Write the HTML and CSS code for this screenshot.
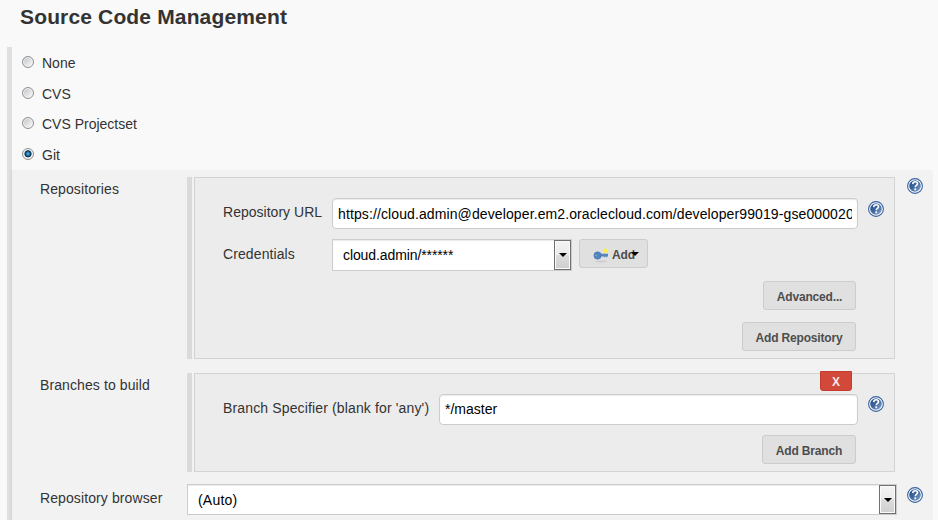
FILE: index.html
```html
<!DOCTYPE html>
<html lang="en">
<head>
<meta charset="utf-8">
<title>Source Code Management</title>
<link rel="stylesheet" href="styles.css">
</head>
<body>
<svg class="defs" aria-hidden="true">
  <defs>
    <linearGradient id="helpFill" x1="0" y1="0" x2="1" y2="1">
      <stop offset="0" stop-color="#1f478a"/><stop offset=".5" stop-color="#41699f"/><stop offset="1" stop-color="#8eabd0"/>
    </linearGradient>
    <symbol id="help" viewBox="0 0 16 16">
      <circle cx="8" cy="8" r="7.4" fill="#fff" stroke="#36609e" stroke-width="1.1"/>
      <circle cx="8" cy="8" r="5.8" fill="url(#helpFill)"/>
      <path d="M5.7 6.1C5.8 4.4 6.8 3.7 8.1 3.7c1.4 0 2.4.8 2.4 2 0 1.8-2.2 1.7-2.2 3.5" fill="none" stroke="#fff" stroke-width="1.6"/>
      <rect x="7.3" y="10.4" width="1.8" height="1.8" fill="#fff"/>
    </symbol>
  </defs>
</svg>
<h1 class="title">Source Code Management</h1>
<main class="scm">
  <label class="option"><span class="radio"></span>None</label>
  <label class="option"><span class="radio"></span>CVS</label>
  <label class="option"><span class="radio"></span>CVS Projectset</label>
  <label class="option"><span class="radio checked"></span>Git</label>
  <section class="git">
    <div class="row">
      <span class="name">Repositories</span>
      <div class="group">
        <div class="box repos">
          <div class="field">
            <span class="caption url-caption">Repository URL</span>
            <div class="input"><span class="value url">https://cloud.admin@developer.em2.oraclecloud.com/developer99019-gse000020</span></div>
            <svg class="help"><use href="#help"/></svg>
          </div>
          <div class="field credentials">
            <span class="caption url-caption cred">Credentials</span>
            <div class="select small"><span class="choice">cloud.admin/******</span><span class="arrow"></span></div>
            <button class="button add">
              <svg class="key" viewBox="0 0 16 16">
                <ellipse cx="8" cy="14.4" rx="6" ry="1" fill="#cdcdcd"/>
                <circle cx="12.5" cy="3.8" r="2.3" fill="#faed50"/>
                <path d="M7 6.8h8v2.6h-1.2v.8h-1v-.8h-1v.8h-1v-.8H7z" fill="#5585bd"/>
                <circle cx="4.6" cy="8.5" r="3.7" fill="#5585bd" stroke="#416fa9" stroke-width=".5"/>
                <circle cx="3" cy="8.5" r=".7" fill="#9dbadb"/>
              </svg>
              <span>Add</span><span class="caret"></span>
            </button>
          </div>
          <button class="button advanced">Advanced...</button>
          <button class="button add-repo">Add Repository</button>
        </div>
      </div>
      <svg class="help"><use href="#help"/></svg>
    </div>
    <div class="row second">
      <span class="name">Branches to build</span>
      <div class="group">
        <div class="box branches">
          <button class="delete">X</button>
          <div class="field">
            <span class="caption branch-caption">Branch Specifier (blank for 'any')</span>
            <div class="input branch-input"><span class="value">*/master</span></div>
            <svg class="help branch-help"><use href="#help"/></svg>
          </div>
          <button class="button add-branch">Add Branch</button>
        </div>
      </div>
    </div>
    <div class="row third">
      <span class="name">Repository browser</span>
      <div class="select wide"><span class="choice auto">(Auto)</span><span class="arrow"></span></div>
      <svg class="help browser-help"><use href="#help"/></svg>
    </div>
  </section>
</main>
</body>
</html>
```
FILE: styles.css
```css
* { box-sizing: border-box; }

body {
  margin: 0;
  height: 520px;
  overflow: hidden;
  background: #f9f9f9;
  color: #333;
  font: 14px/20px "Liberation Sans", Arial, sans-serif;
}

.defs { position: absolute; width: 0; height: 0; }

.title {
  margin: 0;
  height: 47px;
  padding: 5px 0 0 20px;
  font-size: 21px;
  line-height: 24px;
  letter-spacing: .15px;
}

.scm {
  margin-left: 7px;
  height: 473px;
  border-left: 5px solid #e0e0e0;
}

.option {
  display: flex;
  align-items: center;
  height: 30.75px;
  padding: 1px 0 0 10px;
}

.radio {
  width: 12px;
  height: 12px;
  margin: -2px 8px 0 0;
  border: 1px solid #8e8f8f;
  border-radius: 50%;
  background: linear-gradient(135deg, #bcc0c5, #f2f2f2 80%);
  box-shadow: inset 0 0 0 1px #f4f4f4;
}

.radio.checked {
  background: radial-gradient(circle at 50% 48%, #62c5ec 0, #1c6c9c 1.8px, #0d2c49 3.2px, #f4f4f4 4px);
}

.git {
  width: 923px;
  height: 350px;
  margin-left: -2px;
  padding-top: 7px;
  background: rgba(0, 0, 0, .027);
}

.row { display: flex; align-items: flex-start; padding-left: 30px; }
.row.second { margin-top: 14px; }
.row.third { margin-top: 12px; }
.name { width: 147px; padding-top: 2px; letter-spacing: .1px; }
.third .name { padding-top: 4px; }

.group {
  width: 708px;
  padding-left: 2px;
  border-left: 5px solid #dadada;
}

.box {
  width: 701px;
  border: 1px solid #d3d3d3;
  background: #ececec;
  display: flex;
  flex-direction: column;
  align-items: flex-end;
  padding-right: 38px;
}
.repos { height: 182px; padding-top: 20px; }
.branches { height: 99px; padding-top: 20px; position: relative; }

.field {
  display: flex;
  flex: none;
  align-items: flex-start;
  align-self: flex-start;
  width: 663px;
  margin-right: -2px;
  padding-left: 28px;
}
.field .input { flex: 1; }
.credentials { margin-top: 10px; }
.caption { flex: none; padding-top: 4px; }
.url-caption { width: 109px; letter-spacing: .02px; }
.cred { padding-top: 5px; letter-spacing: .1px; }
.branch-caption { width: 216px; letter-spacing: .14px; }

.input {
  height: 31px;
  min-width: 0;
  padding: 5px 5px 0;
  border: 1px solid #ccc;
  border-radius: 4px;
  background: #fff;
  box-shadow: inset 0 1px 1px rgba(0, 0, 0, .08);
  color: #000;
}
.branch-input { padding-top: 4px; }
.value { display: block; overflow: hidden; white-space: nowrap; }
.url { letter-spacing: .11px; }

.help { flex: none; width: 16px; height: 16px; display: block; }
.field .help { margin: 3px -26px 0 10px; }
.field .branch-help { margin-top: 2px; }
.row > .help { margin: 1px 0 0 12px; }
.row > .browser-help { margin: 3px 0 0 10px; }

.select {
  display: flex;
  flex: none;
  border: 1px solid #ccc;
  background: #fff;
  box-shadow: inset 0 1px 1px rgba(0, 0, 0, .08);
  color: #000;
}
.small { width: 240px; height: 32px; }
.wide { width: 710px; height: 31px; }
.choice { flex: 1; padding: 5px 10px 0; letter-spacing: -.1px; }
.auto { letter-spacing: .2px; }

.arrow {
  display: flex;
  align-items: center;
  justify-content: center;
  width: 17px;
  border: 1px solid #707070;
  background: linear-gradient(#f3f3f3, #ebebeb 49%, #ddd 50%, #cfcfcf);
  box-shadow: inset 0 0 0 1px #fafafa;
}
.arrow::before, .caret {
  content: "";
  border: solid transparent;
  border-width: 4px 4px 0;
  border-top-color: #000;
}
.small .arrow::before { margin-left: 1px; }

.button {
  height: 29px;
  padding: 2px 0 0;
  border: 1px solid #ccc;
  border-radius: 3px;
  background: #e0e0e0;
  color: #4d4d4d;
  font: bold 12px/16px "Liberation Sans", Arial, sans-serif;
  letter-spacing: -.17px;
}
.add {
  display: flex;
  align-items: center;
  width: 69px;
  margin-left: 7px;
  padding-left: 13px;
}
.key { width: 16px; height: 16px; margin-right: 3px; }
.caret { margin-left: -4px; margin-top: -2px; }
.advanced { width: 93px; margin-top: 10px; }
.add-repo { width: 114px; margin-top: 12px; }
.add-branch { width: 94px; margin-top: 10px; }

.delete {
  position: absolute;
  top: -3px;
  right: 42px;
  width: 32px;
  height: 20px;
  padding: 1px 0 0;
  border: 1px solid #c43c2d;
  border-radius: 0 0 3px 3px;
  background: #d24939;
  color: #f5eaea;
  font: bold 12px/16px "Liberation Sans", Arial, sans-serif;
}
```
